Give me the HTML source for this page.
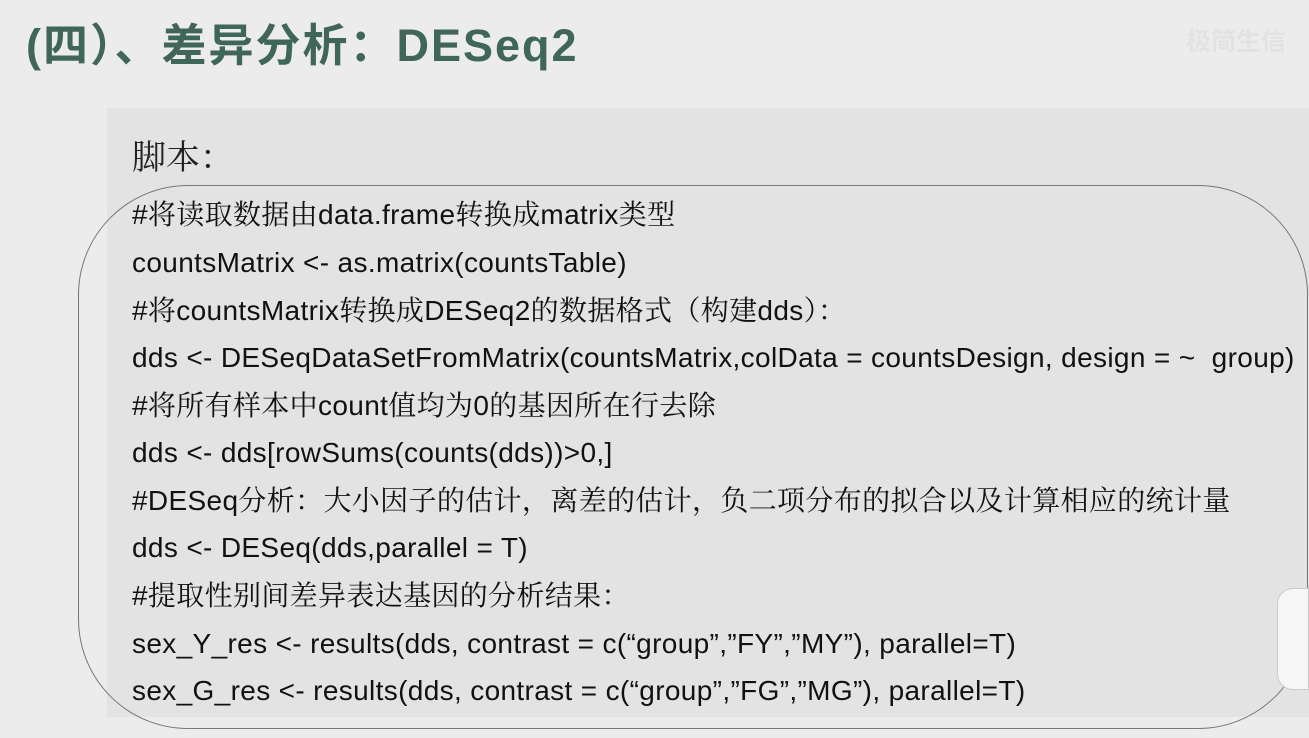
<!DOCTYPE html>
<html><head><meta charset="utf-8"><style>
body{margin:0;width:1309px;height:738px;background:#ececec;position:relative;overflow:hidden;font-family:"Liberation Sans","Noto Serif CJK SC",serif;}
.t{position:absolute;left:26px;top:18px;font-family:"Liberation Sans","Noto Sans CJK SC",sans-serif;font-weight:bold;font-size:45px;letter-spacing:2px;color:#3f6657;white-space:nowrap;line-height:56px}
.wm{position:absolute;left:1186px;top:22px;font-size:25px;color:#e2e2e2;font-family:"Noto Sans CJK SC",sans-serif;font-weight:bold}
.panel{position:absolute;left:107px;top:108px;width:1202px;height:609px;background:#e3e3e3}
.box{position:absolute;left:78px;top:185px;width:1228px;height:542px;border:1.3px solid #777;border-radius:110px}
.h{position:absolute;left:132px;top:130px;font-size:34px;color:#222;font-family:"Liberation Serif","Noto Serif CJK SC",serif}
.l{position:absolute;left:132px;font-size:28px;letter-spacing:0.35px;color:#111;white-space:nowrap;line-height:30px}
.c{position:absolute;right:0;top:588px;width:30px;height:100px;background:#f6f6f6;border-radius:16px 0 0 16px;border:1px solid #ccc}
</style></head><body>
<div class="t">(四）、差异分析：DESeq2</div>
<div class="wm">极简生信</div>
<div class="panel"></div>
<div class="box"></div>
<div class="h">脚本：</div>
<div class="l" style="top:200px">#将读取数据由data.frame转换成matrix类型</div>
<div class="l" style="top:248px">countsMatrix &lt;- as.matrix(countsTable)</div>
<div class="l" style="top:296px">#将countsMatrix转换成DESeq2的数据格式（构建dds）：</div>
<div class="l" style="top:343px">dds &lt;- DESeqDataSetFromMatrix(countsMatrix,colData = countsDesign, design = ~&nbsp; group)</div>
<div class="l" style="top:391px">#将所有样本中count值均为0的基因所在行去除</div>
<div class="l" style="top:438px">dds &lt;- dds[rowSums(counts(dds))&gt;0,]</div>
<div class="l" style="top:486px">#DESeq分析：大小因子的估计，离差的估计，负二项分布的拟合以及计算相应的统计量</div>
<div class="l" style="top:533px">dds &lt;- DESeq(dds,parallel = T)</div>
<div class="l" style="top:581px">#提取性别间差异表达基因的分析结果：</div>
<div class="l" style="top:629px">sex_Y_res &lt;- results(dds, contrast = c(“group”,”FY”,”MY”), parallel=T)</div>
<div class="l" style="top:676px">sex_G_res &lt;- results(dds, contrast = c(“group”,”FG”,”MG”), parallel=T)</div>
<div class="c"></div>
</body></html>
